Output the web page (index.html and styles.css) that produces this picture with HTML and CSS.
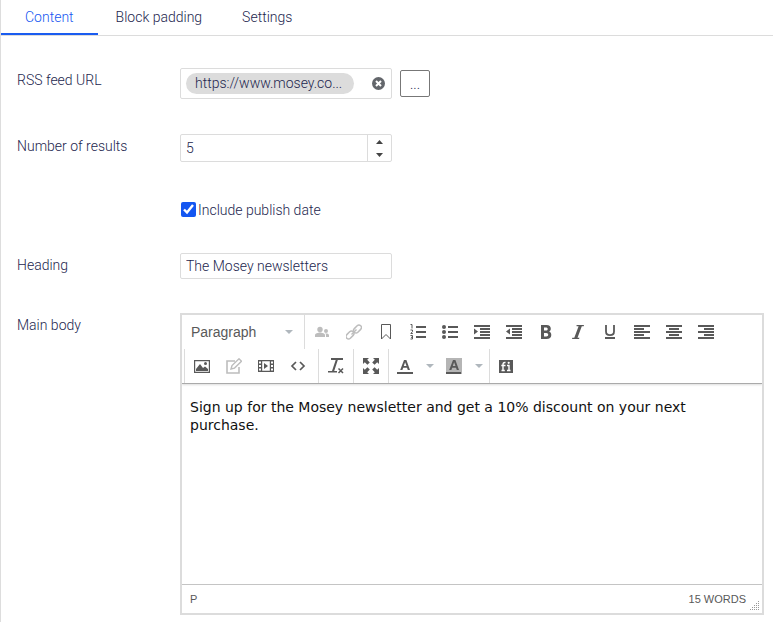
FILE: index.html
```html
<!DOCTYPE html>
<html lang="en">
<head>
<meta charset="utf-8">
<title>RSS feed block</title>
<link rel="stylesheet" href="styles.css">
</head>
<body>
<main class="panel">
  <nav class="tabs">
    <a class="tab tab-active" href="#content">Content</a>
    <a class="tab" href="#padding">Block padding</a>
    <a class="tab" href="#settings">Settings</a>
  </nav>
  <form class="form" id="content">
    <div class="row">
      <label class="label" for="feed">RSS feed URL</label>
      <div class="field feed-field">
        <div class="box feed-box">
          <a class="chip" href="#feed">https://www.mosey.co...</a>
          <button class="clear" type="button" aria-label="Clear">
            <svg width="13" height="13" viewBox="0 0 13 13"><circle cx="6.5" cy="6.5" r="6.5" fill="#63666b"/><path d="M4 4l5 5M9 4l-5 5" stroke="#fff" stroke-width="2"/></svg>
          </button>
        </div>
        <button class="browse" id="feed" type="button">...</button>
      </div>
    </div>
    <div class="row">
      <label class="label" for="count">Number of results</label>
      <div class="box number-box">
        <input class="input" id="count" type="number" value="5">
        <div class="spinner">
          <button class="step" type="button" aria-label="Increase"><svg width="7" height="4" viewBox="0 0 7 4"><path d="M0 4L3.500 0L7 4z" fill="#444"/></svg></button>
          <button class="step" type="button" aria-label="Decrease"><svg width="7" height="4" viewBox="0 0 7 4"><path d="M0 0h7L3.500 4z" fill="#444"/></svg></button>
        </div>
      </div>
    </div>
    <div class="row">
      <label class="check"><input class="checkbox" type="checkbox" checked>Include publish date</label>
    </div>
    <div class="row">
      <label class="label" for="heading">Heading</label>
      <div class="box text-box"><input class="input" id="heading" type="text" value="The Mosey newsletters"></div>
    </div>
    <div class="row">
      <label class="label" for="body">Main body</label>
      <div class="editor">
        <div class="toolbar">
          <div class="toolrow">
            <div class="format">
              <select class="format-select" aria-label="Format"><option>Paragraph</option></select>
              <svg class="caret" width="8" height="4" viewBox="0 0 8 4"><path d="M0 0h8L4 4z"/></svg>
            </div>
            <div class="group">
              <button class="tool tool-off" type="button" aria-label="Personalized content"><svg viewBox="0 0 16 16"><circle cx="6" cy="5.500" r="2.700"/><path d="M1 13v-2c0-1.500 3-2.500 5-2.500s5 1 5 2.500v2z"/><circle cx="12" cy="7" r="2"/><path d="M12 13v-2.500l-1-1c2-.4 4 .3 4 1.500v2z"/></svg></button>
              <button class="tool tool-off" type="button" aria-label="Link"><svg viewBox="0 0 16 16"><g fill="none" stroke="#bdbdbd" stroke-width="1.500"><rect x="-.5" y="8.500" width="9" height="5" rx="2.500" transform="rotate(-45 4 11)"/><rect x="7" y="2.500" width="9" height="5" rx="2.500" transform="rotate(-45 11.500 5)"/><path d="M5.500 10.500l5-5"/></g></svg></button>
              <button class="tool" type="button" aria-label="Anchor"><svg viewBox="0 0 16 16"><path d="M3.500 .5h9v14.500L8 10.500 3.500 15z" fill="none" stroke="#595959"/></svg></button>
              <button class="tool" type="button" aria-label="Numbered list"><svg viewBox="0 0 16 16"><path d="M6 2h10v2H6zM6 7h10v2H6zM6 12h10v2H6z"/><path d="M.5 .5H2v4M.5 6h2v1.500L.8 9.500h2M.5 11.500h2v3.500h-2M1 13.300h1.500" fill="none" stroke="#595959"/></svg></button>
              <button class="tool" type="button" aria-label="Bullet list"><svg viewBox="0 0 16 16"><path d="M6 2h10v2H6zM6 7h10v2H6zM6 12h10v2H6z"/><circle cx="2" cy="3" r="2"/><circle cx="2" cy="8" r="2"/><circle cx="2" cy="13" r="2"/></svg></button>
              <button class="tool" type="button" aria-label="Increase indent"><svg viewBox="0 0 16 16"><path d="M0 1h16v2H0zM6 4h10v2H6zM6 7h10v2H6zM6 10h10v2H6zM0 13h16v2H0zM0 4.500L4 7.500 0 10.500z"/></svg></button>
              <button class="tool" type="button" aria-label="Decrease indent"><svg viewBox="0 0 16 16"><path d="M0 1h16v2H0zM6 4h10v2H6zM6 7h10v2H6zM6 10h10v2H6zM0 13h16v2H0zM4 4.500L0 7.500l4 3z"/></svg></button>
              <button class="tool" type="button" aria-label="Bold"><svg viewBox="0 0 16 16"><path fill-rule="evenodd" d="M3 1h5.500c3 0 4.300 1.500 4.300 3.700 0 1.400-.7 2.400-1.800 2.900 1.500.5 2.300 1.700 2.300 3.300 0 2.600-1.800 4.100-4.800 4.100H3zM6 3.500v3h1.800c1.200 0 1.900-.5 1.900-1.500s-.7-1.500-1.900-1.500zM6 9v3.500h2.200c1.300 0 2-.6 2-1.700S9.500 9 8.200 9z"/></svg></button>
              <button class="tool" type="button" aria-label="Italic"><svg viewBox="0 0 16 16"><path d="M6.500 1H14l-.3 1.200h-1.900L7.500 13.800h2L9 15H2l.3-1.200h2L8.600 2.200h-2z"/></svg></button>
              <button class="tool" type="button" aria-label="Underline"><svg viewBox="0 0 16 16"><path d="M4 1v6.500c0 2.500 1.500 3.700 4 3.700s4-1.200 4-3.700V1" fill="none" stroke="#595959" stroke-width="1.800"/><path d="M3 13h10v2H3z"/></svg></button>
              <button class="tool" type="button" aria-label="Align left"><svg viewBox="0 0 16 16"><path d="M0 1h16v2H0zM0 4h10v2H0zM0 7h16v2H0zM0 10h10v2H0zM0 13h16v2H0z"/></svg></button>
              <button class="tool" type="button" aria-label="Align center"><svg viewBox="0 0 16 16"><path d="M0 1h16v2H0zM3 4h10v2H3zM0 7h16v2H0zM3 10h10v2H3zM0 13h16v2H0z"/></svg></button>
              <button class="tool" type="button" aria-label="Align right"><svg viewBox="0 0 16 16"><path d="M0 1h16v2H0zM6 4h10v2H6zM0 7h16v2H0zM6 10h10v2H6zM0 13h16v2H0z"/></svg></button>
            </div>
          </div>
          <div class="toolrow toolrow-second">
            <div class="group group-wide">
              <button class="tool" type="button" aria-label="Image"><svg viewBox="0 0 16 16"><path fill-rule="evenodd" d="M0 2h16v13H0zM1.200 3.200v10.600h13.600V3.200z"/><path d="M2 13V11l4-5 3 4 2-1.500 3 2.500v2z"/><circle cx="11.500" cy="5.500" r="1.500"/></svg></button>
              <button class="tool tool-off" type="button" aria-label="Edit image"><svg viewBox="0 0 16 16"><path d="M9 3H1v12h12V9" fill="none" stroke="#bdbdbd" stroke-width="1.600"/><path d="M5 11l1-3.500L13 .8l2.500 2.500-7 6.800z" fill="#fff" stroke="#bdbdbd" stroke-width="1.400"/></svg></button>
              <button class="tool" type="button" aria-label="Media"><svg viewBox="0 0 16 16"><path fill-rule="evenodd" d="M0 2h16v12H0zM1 3.500v2h2v-2zM1 7v2h2V7zM1 10.500v2h2v-2zM13 3.500v2h2v-2zM13 7v2h2V7zM13 10.500v2h2v-2zM4.200 3.200v9.600h7.600V3.200z"/><path d="M6 5l4 3-4 3z"/></svg></button>
              <button class="tool" type="button" aria-label="Source code"><svg viewBox="0 0 16 16"><path d="M6 4L2 8l4 4M10 4l4 4-4 4" fill="none" stroke="#595959" stroke-width="1.700"/></svg></button>
            </div>
            <div class="group">
              <button class="tool" type="button" aria-label="Clear formatting"><svg viewBox="0 0 16 16"><path d="M3 0h12v2H9.800L6.200 13H10v1.500H0V13h4L7.700 2H3z"/><path d="M9 9h7v7H9z" fill="#fff"/><path d="M10.500 10.500l4.500 4.500M15 10.500L10.500 15" stroke="#595959" stroke-width="1.500"/></svg></button>
            </div>
            <div class="group">
              <button class="tool" type="button" aria-label="Fullscreen"><svg viewBox="0 0 16 16"><path d="M0 0h6L4.200 1.800l2.600 2.600-2.400 2.400-2.600-2.600L0 6zM16 0v6l-1.800-1.800-2.600 2.600-2.400-2.400 2.600-2.600L10 0zM0 16v-6l1.800 1.800 2.600-2.600 2.400 2.400-2.600 2.600L6 16zM16 16h-6l1.800-1.800-2.600-2.600 2.400-2.400 2.600 2.600L16 10z"/></svg></button>
            </div>
            <div class="group group-flush">
              <button class="tool" type="button" aria-label="Text color"><svg viewBox="0 0 16 16"><path fill-rule="evenodd" d="M7 2h2.400l3.600 10h-2.200l-.8-2.300H6.200L5.400 12H3.200zM8.100 4.200L6.800 8.100h2.700z"/><path d="M0 14h16v2H0z"/></svg></button>
              <button class="drop" type="button" aria-label="Text colors"><svg class="caret" width="8" height="4" viewBox="0 0 8 4"><path d="M0 0h8L4 4z"/></svg></button>
              <button class="tool" type="button" aria-label="Background color"><svg viewBox="0 0 16 16"><path d="M0 0h16v16H0z" fill="#b5b5b5"/><path fill-rule="evenodd" d="M7 2h2.400l3.600 10h-2.200l-.8-2.300H6.200L5.400 12H3.200zM8.100 4.200L6.800 8.100h2.700z"/><path d="M0 14h15v2H0z"/></svg></button>
              <button class="drop" type="button" aria-label="Background colors"><svg class="caret" width="8" height="4" viewBox="0 0 8 4"><path d="M0 0h8L4 4z"/></svg></button>
            </div>
            <div class="group group-flush">
              <button class="tool" type="button" aria-label="Forms"><svg viewBox="0 0 16 16"><path d="M1 2h14v13H1z"/><path d="M5 12.500V6.500c0-1.500.7-2.200 2.500-2M3.300 7.500H7.500M3.500 12.500h3.300M9 7.500h2v5M9 12.500h3.500" fill="none" stroke="#fff" stroke-width="1.400"/><circle cx="10.700" cy="4.800" r="1.100" fill="#fff"/></svg></button>
            </div>
          </div>
        </div>
        <textarea class="body" id="body">Sign up for the Mosey newsletter and get a 10% discount on your next purchase.</textarea>
        <div class="status">
          <span>P</span>
          <span class="words">15 WORDS</span>
          <svg class="grip" width="10" height="10" viewBox="0 0 10 10"><g stroke="#999" stroke-dasharray="1 1"><path d="M8 .5h2M6 2.500h4M4 4.500h6M2 6.500h8M0 8.500h10"/></g></svg>
        </div>
      </div>
    </div>
  </form>
</main>
</body>
</html>
```
FILE: styles.css
```css
* {
  box-sizing: border-box;
}

body {
  margin: 0;
  background: #fff;
  color: #23264e;
  font: 300 14px/24px Roboto, "Liberation Sans", sans-serif;
}

button,
input,
select,
textarea {
  margin: 0;
  padding: 0;
  border: 0;
  background: none;
  color: inherit;
  font: inherit;
  outline: 0;
}

button {
  display: flex;
  align-items: center;
  justify-content: center;
}

.panel {
  min-height: 100vh;
  border-left: 1px solid #ddd;
}

.tabs {
  display: flex;
  height: 36px;
  border-bottom: 1px solid #dcdcdc;
}

.tab {
  height: 35px;
  padding: 5px 20px 0;
  color: inherit;
  text-decoration: none;
}

.tab-active {
  padding: 5px 24px 0;
  margin-right: -2px;
  border-bottom: 2px solid #1a5cf0;
  color: #1456f1;
}

.form {
  display: flex;
  flex-direction: column;
  gap: 34px;
  padding: 32px 9px 7px 16px;
}

.row {
  display: grid;
  grid-template-columns: 163px minmax(0, 1fr);
  align-items: start;
}

.feed-field {
  display: flex;
  align-items: center;
  gap: 8px;
  padding-bottom: 1px;
}

.box {
  display: flex;
  width: 212px;
  border: 1px solid #dcdcdc;
  border-radius: 2px;
}

.feed-box {
  align-items: center;
  justify-content: space-between;
  height: 31px;
  padding: 0 6px 0 5px;
}

.chip {
  width: 168px;
  border-radius: 11px;
  padding: 0 9px;
  background: #dcdcdc;
  color: inherit;
  line-height: 21px;
  text-decoration: none;
  white-space: nowrap;
}

.browse {
  width: 30px;
  height: 27px;
  border: 1px solid #777;
  border-radius: 2px;
}

.number-box {
  height: 28px;
}

.text-box {
  height: 26px;
}

.input {
  flex: 1;
  min-width: 0;
  padding: 0 5px;
  appearance: textfield;
}

.input::-webkit-inner-spin-button {
  appearance: none;
}

.spinner {
  display: flex;
  flex-direction: column;
  width: 24px;
  padding-right: 1px;
  border-left: 1px solid #dcdcdc;
}

.step {
  flex: 1;
}

.check {
  grid-column: 2;
  display: flex;
  align-items: center;
  gap: 2px;
  height: 23px;
  padding: 4px 0 0 1px;
}

.checkbox {
  width: 15px;
  height: 15px;
  accent-color: #1456f1;
}

.editor {
  border: 2px solid #dcdcdc;
  color: #595959;
  font-family: "Liberation Sans", Arial, sans-serif;
  font-weight: 400;
}

.toolbar {
  border-bottom: 1px solid #aaa;
  box-shadow: 0 1px 2px #ddd;
}

.toolrow {
  display: flex;
  height: 34px;
}

.toolrow-second {
  padding-left: 2px;
}

.format {
  display: flex;
  align-items: center;
  width: 122px;
  padding-right: 11px;
}

.format-select {
  flex: 1;
  height: 32px;
  padding-left: 9px;
  appearance: none;
}

.caret {
  fill: #b0b7bd;
}

.group {
  display: flex;
  align-items: center;
  padding: 0 1px;
  border-left: 1px solid #dcdcdc;
}

.group-wide {
  padding-right: 4px;
}

.group-flush {
  padding: 0 2px 0 0;
}

.tool {
  width: 32px;
  height: 32px;
}

.tool svg {
  width: 16px;
  height: 16px;
  fill: #595959;
}

.tool-off svg {
  fill: #bdbdbd;
}

.drop {
  width: 17px;
  height: 32px;
}

.body {
  display: block;
  width: 100%;
  height: 200px;
  padding: 14px 8px;
  resize: none;
  color: #111;
  font: 14px/18px "DejaVu Sans", Verdana, sans-serif;
}

.status {
  display: flex;
  align-items: center;
  height: 29px;
  padding: 0 2px 0 8px;
  border-top: 1px solid #c4c4c4;
  font-size: 11px;
}

.words {
  margin-left: auto;
}

.grip {
  align-self: flex-end;
  margin: 0 0 2px 4px;
}
```
